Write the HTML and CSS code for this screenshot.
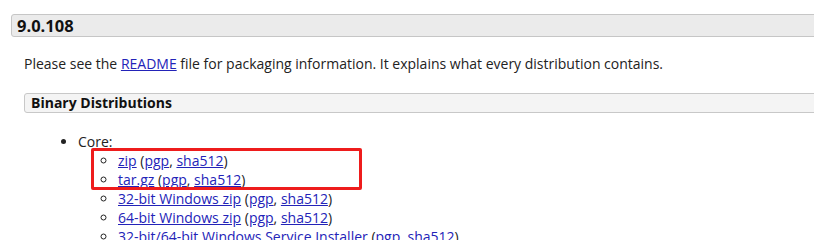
FILE: index.html
```html
<!DOCTYPE html>
<html>
<head>
<meta charset="utf-8">
<link rel="stylesheet" href="styles.css">
</head>
<body>
<div class="page">
  <h3 class="version">9.0.108</h3>
  <div class="section">
    <p class="intro">Please see the <a href="#">README</a> file for packaging information. It explains what every distribution contains.</p>
    <h4 class="sub">Binary Distributions</h4>
    <ul class="outer">
      <li>Core:
        <div class="inner-wrap">
          <div class="highlight"></div>
          <ul class="inner">
            <li><a href="#">zip</a> (<a href="#">pgp</a>, <a href="#">sha512</a>)</li>
            <li><a href="#">tar.gz</a> (<a href="#">pgp</a>, <a href="#">sha512</a>)</li>
            <li><a href="#">32-bit Windows zip</a> (<a href="#">pgp</a>, <a href="#">sha512</a>)</li>
            <li><a href="#">64-bit Windows zip</a> (<a href="#">pgp</a>, <a href="#">sha512</a>)</li>
            <li><a href="#">32-bit/64-bit Windows Service Installer</a> (<a href="#">pgp</a>, <a href="#">sha512</a>)</li>
          </ul>
        </div>
      </li>
    </ul>
  </div>
</div>
</body>
</html>
```
FILE: styles.css
```css
html, body {
  margin: 0;
  padding: 0;
  background: #fff;
  overflow: hidden;
}
.page {
  width: 840px;
  padding: 14px 0 0 11px;
  font-family: "Open Sans", "Liberation Sans", sans-serif;
  font-size: 14px;
  line-height: 19px;
  color: #222;
}
a {
  color: #2323b8;
  text-decoration: underline;
}
.version {
  margin: 0;
  height: 21px;
  line-height: 21px;
  padding: 0 0 0 5px;
  background: #ebebeb;
  border: 1px solid #c6c6c6;
  border-radius: 3px;
  font-size: 16.5px;
  font-weight: 700;
  color: #111;
}
.section {
  padding-left: 13px;
}
.intro {
  margin: 17px 0 0 0;
}
.sub {
  margin: 20px 0 0 0;
  height: 18px;
  line-height: 18px;
  padding: 0 0 0 6px;
  background: #f4f4f4;
  border: 1px solid #c8c8c8;
  border-radius: 3px;
  font-size: 14px;
  font-weight: 700;
  color: #111;
}
.outer {
  margin: 19px 0 0 0;
  padding-left: 54px;
  list-style: disc;
}
.inner-wrap {
  position: relative;
}
.inner {
  margin: 0;
  padding-left: 40px;
  list-style: circle;
}
.highlight {
  position: absolute;
  left: 13px;
  top: -3px;
  width: 265px;
  height: 36px;
  border: 3px solid #ee1c1c;
  border-radius: 2px;
  pointer-events: none;
}
```
